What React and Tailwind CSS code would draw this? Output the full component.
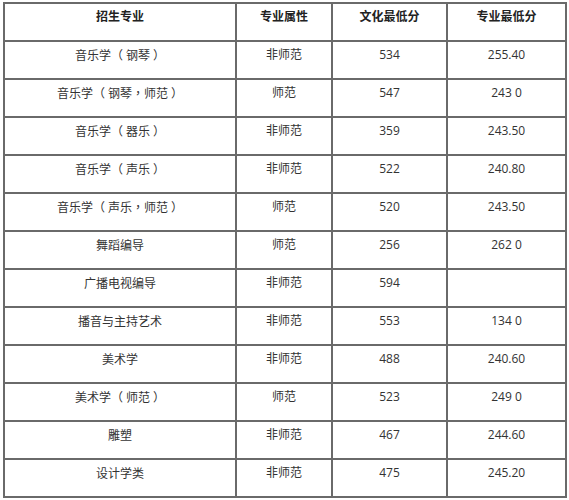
const rows = [
  ["音乐学（钢琴）", "非师范", "534", "255.40"],
  ["音乐学（钢琴，师范）", "师范", "547", "243 0"],
  ["音乐学（器乐）", "非师范", "359", "243.50"],
  ["音乐学（声乐）", "非师范", "522", "240.80"],
  ["音乐学（声乐，师范）", "师范", "520", "243.50"],
  ["舞蹈编导", "师范", "256", "262 0"],
  ["广播电视编导", "非师范", "594", ""],
  ["播音与主持艺术", "非师范", "553", "134 0"],
  ["美术学", "非师范", "488", "240.60"],
  ["美术学（师范）", "师范", "523", "249 0"],
  ["雕塑", "非师范", "467", "244.60"],
  ["设计学类", "非师范", "475", "245.20"],
]

const headers = ["招生专业", "专业属性", "文化最低分", "专业最低分"]

// brackets get a little air inside, as in the source font
function Major({ text }) {
  return text.split(/([（）])/).map((part, i) => {
    if (part === "（") return <span key={i} className="mr-[3px]">（</span>
    if (part === "）") return <span key={i} className="ml-[3px]">）</span>
    return part
  })
}

export default function App() {
  return (
    <div className="w-[569px] h-[500px] bg-white pt-[2px] pl-[3px] font-['Open_Sans','Noto_Sans_CJK_SC',sans-serif]">
      <table className="w-[562px] table-fixed border-collapse text-[12px] leading-[16px] text-[#333]">
        <colgroup>
          <col className="w-[232px]" />
          <col className="w-[96px]" />
          <col className="w-[115px]" />
          <col className="w-[119px]" />
        </colgroup>
        <thead>
          <tr className="h-[38px]">
            {headers.map((h) => (
              <th key={h} className="border-2 border-[#6a6a6a] align-top pt-[5px] text-center font-bold text-[#222]">
                {h}
              </th>
            ))}
          </tr>
        </thead>
        <tbody>
          {rows.map((row, i) => (
            <tr key={i} className="h-[38px]">
              <td className="border-2 border-[#6a6a6a] align-top pt-[5px] text-center font-['Noto_Sans_CJK_TC',sans-serif]">
                <Major text={row[0]} />
              </td>
              {row.slice(1).map((cell, j) => (
                <td key={j} className="border-2 border-[#6a6a6a] align-top pt-[5px] text-center">
                  {cell}
                </td>
              ))}
            </tr>
          ))}
        </tbody>
      </table>
    </div>
  )
}
